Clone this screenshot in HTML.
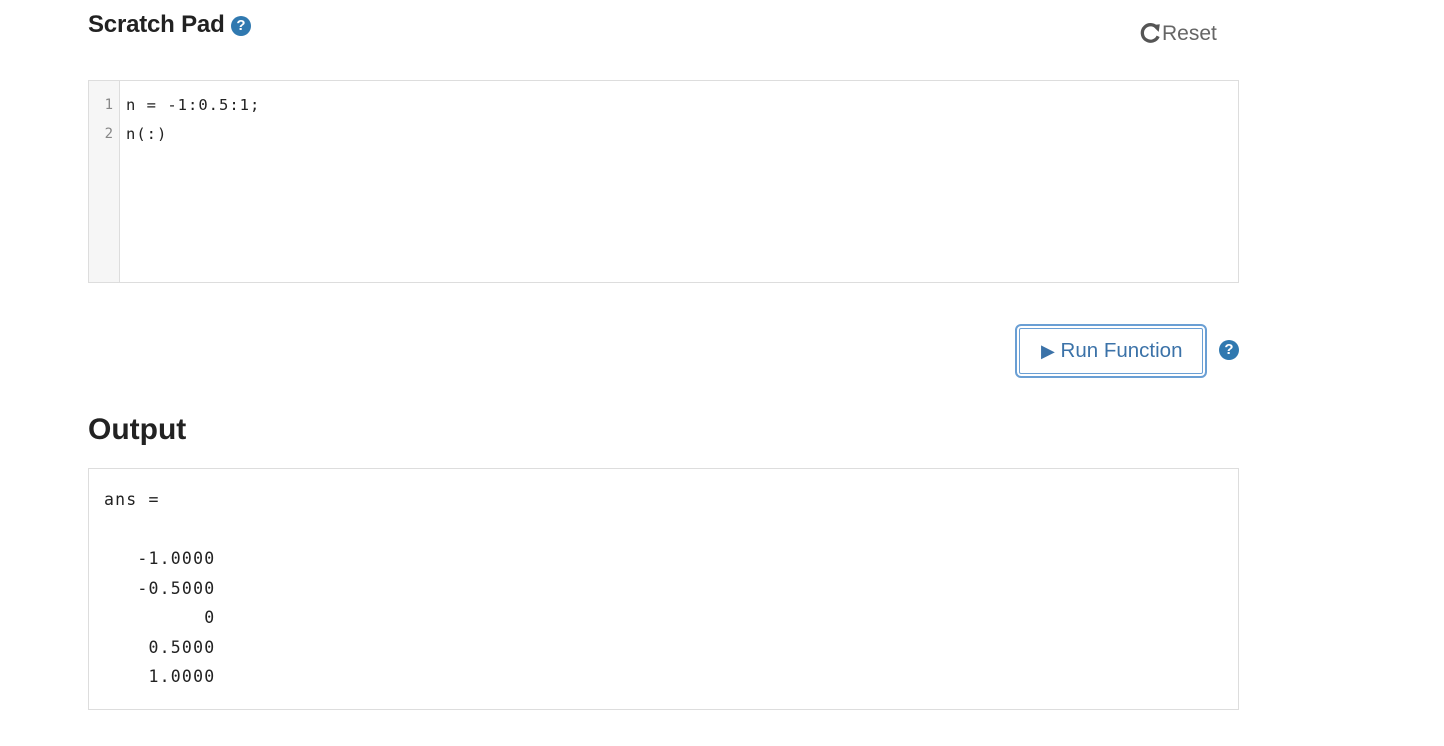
<!DOCTYPE html>
<html><head><style>
body{margin:0;background:#fff;width:1444px;height:746px;position:relative;font-family:"Liberation Sans",sans-serif;overflow:hidden}
.abs{position:absolute}
.q{display:inline-block;width:20px;height:20px;border-radius:50%;background:#3079b0;color:#fff;font-size:15px;font-weight:bold;text-align:center;line-height:20px}
.mono{font-family:"DejaVu Sans Mono","Liberation Mono",monospace}
</style></head><body>
<div class="abs" style="left:88px;top:11px;font-size:24px;font-weight:bold;color:#222;letter-spacing:-0.2px">Scratch Pad <span class="q" style="vertical-align:2px;letter-spacing:0">?</span></div>
<div class="abs" style="left:1140px;top:22px;font-size:21px;color:#666">
<svg width="22" height="22" viewBox="0 0 20 20" style="vertical-align:-4px"><path d="M16 6 A7.5 7.5 0 1 0 16.5 13" fill="none" stroke="#555" stroke-width="3"/><path d="M11 3 L18 2 L17 9 Z" fill="#555"/></svg>Reset</div>
<div class="abs" style="left:88px;top:80px;width:1149px;height:201px;border:1px solid #ddd">
<div class="abs" style="left:0;top:0;width:30px;height:201px;background:#f6f6f6;border-right:1px solid #ddd"></div>
<div class="abs mono" style="left:0;top:10px;width:24px;text-align:right;font-size:14px;line-height:29px;color:#888">1<br>2</div>
<div class="abs mono" style="left:37px;top:10px;font-size:15.5px;letter-spacing:1px;line-height:29px;color:#222">n = -1:0.5:1;<br>n(:)</div>
</div>
<div class="abs" style="left:1015px;top:324px;width:188px;height:50px;border:2px solid #6a9fd4;border-radius:6px;box-shadow:inset 0 0 0 2px #fff,inset 0 0 0 3px #6a9fd4"></div>
<div class="abs" style="left:1041px;top:339px;font-size:20.5px;color:#3b72a8"><span style="font-size:18px">▶</span> Run Function</div>
<div class="abs" style="left:1219px;top:340px"><span class="q">?</span></div>
<div class="abs" style="left:88px;top:413px;font-size:30px;font-weight:bold;color:#222">Output</div>
<div class="abs" style="left:88px;top:468px;width:1149px;height:240px;border:1px solid #ddd"></div>
<pre class="abs mono" style="left:104px;top:485px;margin:0;font-size:16.5px;letter-spacing:1.2px;line-height:29.5px;color:#222">ans =

   -1.0000
   -0.5000
         0
    0.5000
    1.0000</pre>
</body></html>
